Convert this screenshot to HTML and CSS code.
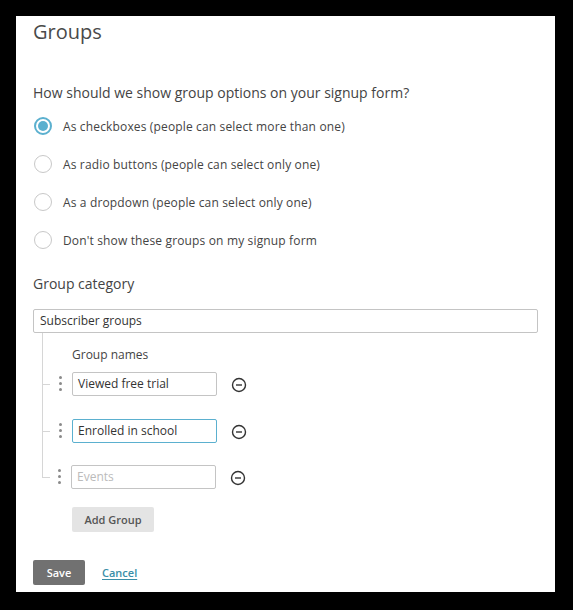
FILE: index.html
```html
<!DOCTYPE html>
<html lang="en">
<head>
    <meta charset="UTF-8">
    <meta name="viewport" content="width=device-width, initial-scale=1.0">
    <title>Groups</title>
    <link rel="stylesheet" href="styles.css">
</head>
<body>
    <div class="panel">
        <h1 class="title">Groups</h1>

        <p class="question">How should we show group options on your signup form?</p>
        <div class="options">
            <label class="option"><span class="radio checked"></span>As checkboxes (people can select more than one)</label>
            <label class="option"><span class="radio"></span>As radio buttons (people can select only one)</label>
            <label class="option"><span class="radio"></span>As a dropdown (people can select only one)</label>
            <label class="option"><span class="radio"></span>Don't show these groups on my signup form</label>
        </div>

        <p class="section-label">Group category</p>
        <div class="category">Subscriber groups</div>

        <div class="tree">
            <p class="names-label">Group names</p>
            <div class="group-row">
                <span class="dots"><i></i><i></i><i></i></span>
                <div class="field">Viewed free trial</div>
                <span class="remove">
                    <svg width="16" height="16" viewBox="0 0 16 16"><circle cx="8" cy="8" r="6.5" fill="none" stroke="#333" stroke-width="1.4"/><line x1="5" y1="8" x2="11" y2="8" stroke="#333" stroke-width="1.4"/></svg>
                </span>
            </div>
            <div class="group-row">
                <span class="dots"><i></i><i></i><i></i></span>
                <div class="field focused">Enrolled in school</div>
                <span class="remove">
                    <svg width="16" height="16" viewBox="0 0 16 16"><circle cx="8" cy="8" r="6.5" fill="none" stroke="#333" stroke-width="1.4"/><line x1="5" y1="8" x2="11" y2="8" stroke="#333" stroke-width="1.4"/></svg>
                </span>
            </div>
            <div class="group-row last">
                <span class="dots"><i></i><i></i><i></i></span>
                <div class="field placeholder">Events</div>
                <span class="remove">
                    <svg width="16" height="16" viewBox="0 0 16 16"><circle cx="8" cy="8" r="6.5" fill="none" stroke="#333" stroke-width="1.4"/><line x1="5" y1="8" x2="11" y2="8" stroke="#333" stroke-width="1.4"/></svg>
                </span>
            </div>
        </div>

        <button class="add-btn">Add Group</button>

        <div class="actions">
            <button class="save-btn">Save</button>
            <a class="cancel" href="#">Cancel</a>
        </div>
    </div>
</body>
</html>
```

FILE: styles.css
```css
body {
    margin: 0;
    background: #000;
    font-family: "Open Sans", Arial, sans-serif;
    color: #444;
}

.panel {
    margin: 16px 18px 18px 16px;
    height: 576px;
    background: #fff;
    padding: 0 17px 0 17px;
    box-sizing: border-box;
    overflow: hidden;
}

.title {
    margin: 0;
    padding-top: 4px;
    font-size: 20px;
    font-weight: 400;
    color: #4a4a4a;
    line-height: 24px;
}

.question {
    margin: 39px 0 0;
    font-size: 14px;
    line-height: 20px;
}

.options {
    margin-top: 4px;
}

.option {
    display: flex;
    align-items: center;
    height: 38px;
    font-size: 12px;
    letter-spacing: 0.15px;
}

.radio {
    width: 16px;
    height: 16px;
    border: 1px solid #c8c8c8;
    border-radius: 50%;
    margin-right: 11px;
    margin-left: 1px;
    box-sizing: content-box;
    flex-shrink: 0;
}

.radio.checked {
    border: 2px solid #5bb0cf;
    width: 14px;
    height: 14px;
    position: relative;
}

.radio.checked::after {
    content: "";
    position: absolute;
    left: 2px;
    top: 2px;
    width: 10px;
    height: 10px;
    border-radius: 50%;
    background: #5bb0cf;
}

.section-label {
    margin: 15px 0 0;
    font-size: 14px;
    line-height: 20px;
}

.category {
    margin-top: 15px;
    height: 24px;
    border: 1px solid #c4c4c4;
    border-radius: 2px;
    box-sizing: border-box;
    padding: 0 6px;
    font-size: 12px;
    line-height: 22px;
    color: #333;
}

.tree {
    margin-left: 9px;
}

.names-label {
    margin: 0;
    padding: 14px 0 9px 29px;
    font-size: 12px;
    line-height: 16px;
    border-left: 1px solid #d6d6d6;
}

.group-row {
    display: flex;
    align-items: flex-start;
    height: 46.5px;
    border-left: 1px solid #d6d6d6;
    position: relative;
}

.group-row.last {
    height: 24px;
    border-left: none;
}

.group-row::before {
    content: "";
    position: absolute;
    left: 0;
    top: -11px;
    width: 7px;
    height: 23px;
    border-bottom: 1px solid #d6d6d6;
}

.group-row.last::before {
    border-left: 1px solid #d6d6d6;
}

.dots {
    display: flex;
    flex-direction: column;
    gap: 3px;
    margin: 4px 10px 0 16px;
}

.dots i {
    display: block;
    width: 3px;
    height: 3px;
    border-radius: 50%;
    background: #8a8a8a;
}

.field {
    width: 145px;
    height: 24px;
    border: 1px solid #c4c4c4;
    border-radius: 2px;
    box-sizing: border-box;
    padding: 0 5px;
    font-size: 12px;
    line-height: 22px;
    color: #333;
}

.field.focused {
    border-color: #5bb0cf;
}

.field.placeholder {
    color: #bbb;
}

.remove {
    margin: 4px 0 0 14px;
    height: 16px;
}

.add-btn {
    display: block;
    margin: 18px 0 0 39px;
    width: 82px;
    height: 25px;
    border: none;
    border-radius: 2px;
    background: #e4e4e4;
    color: #555;
    font-family: "Open Sans", Arial, sans-serif;
    font-size: 11px;
    font-weight: 600;
}

.actions {
    display: flex;
    align-items: center;
    margin-top: 28px;
}

.save-btn {
    width: 52px;
    height: 25px;
    border: none;
    border-radius: 2px;
    background: #717171;
    color: #fff;
    font-family: "Open Sans", Arial, sans-serif;
    font-size: 11px;
    font-weight: 600;
}

.cancel {
    margin-left: 17px;
    font-size: 11px;
    font-weight: 600;
    color: #3a8ea8;
    text-decoration: underline;
    text-underline-offset: 2px;
}
```
